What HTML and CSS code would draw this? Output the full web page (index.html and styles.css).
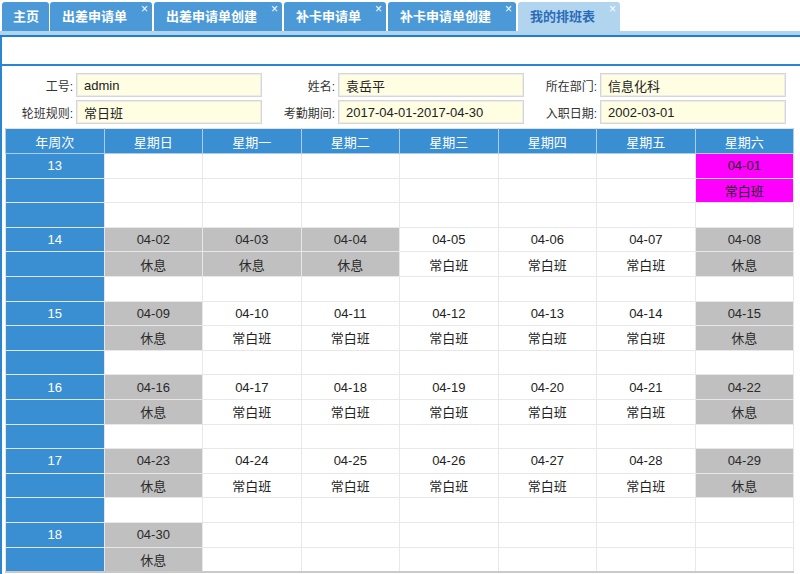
FILE: index.html
```html
<!DOCTYPE html>
<html lang="zh-CN">
<head>
<meta charset="utf-8">
<title>我的排班表</title>
<link rel="stylesheet" href="styles.css">
</head>
<body>
<div class="tabbar">
  <div class="tab home"><span class="tab-text">主页</span></div>
  <div class="tab"><span class="tab-text">出差申请单</span><span class="close">×</span></div>
  <div class="tab"><span class="tab-text">出差申请单创建</span><span class="close">×</span></div>
  <div class="tab"><span class="tab-text">补卡申请单</span><span class="close">×</span></div>
  <div class="tab"><span class="tab-text">补卡申请单创建</span><span class="close">×</span></div>
  <div class="tab active"><span class="tab-text">我的排班表</span><span class="close">×</span></div>
</div>
<div class="strip"></div>
<div class="panel">
  <div class="toolbar"></div>
  <div class="form">
    <label class="lbl">工号:</label><div class="field">admin</div>
    <label class="lbl">姓名:</label><div class="field">袁岳平</div>
    <label class="lbl">所在部门:</label><div class="field">信息化科</div>
    <label class="lbl">轮班规则:</label><div class="field">常日班</div>
    <label class="lbl">考勤期间:</label><div class="field">2017-04-01-2017-04-30</div>
    <label class="lbl">入职日期:</label><div class="field">2002-03-01</div>
  </div>
  <table class="sched">
    <thead>
      <tr><th>年周次</th><th>星期日</th><th>星期一</th><th>星期二</th><th>星期三</th><th>星期四</th><th>星期五</th><th>星期六</th></tr>
    </thead>
    <tbody>
      <tr><td class="wk">13</td><td></td><td></td><td></td><td></td><td></td><td></td><td class="hl">04-01</td></tr>
      <tr><td class="wk"></td><td></td><td></td><td></td><td></td><td></td><td></td><td class="hl">常白班</td></tr>
      <tr><td class="wk"></td><td></td><td></td><td></td><td></td><td></td><td></td><td></td></tr>

      <tr><td class="wk">14</td><td class="off">04-02</td><td class="off">04-03</td><td class="off">04-04</td><td>04-05</td><td>04-06</td><td>04-07</td><td class="off">04-08</td></tr>
      <tr><td class="wk"></td><td class="off">休息</td><td class="off">休息</td><td class="off">休息</td><td>常白班</td><td>常白班</td><td>常白班</td><td class="off">休息</td></tr>
      <tr><td class="wk"></td><td></td><td></td><td></td><td></td><td></td><td></td><td></td></tr>

      <tr><td class="wk">15</td><td class="off">04-09</td><td>04-10</td><td>04-11</td><td>04-12</td><td>04-13</td><td>04-14</td><td class="off">04-15</td></tr>
      <tr><td class="wk"></td><td class="off">休息</td><td>常白班</td><td>常白班</td><td>常白班</td><td>常白班</td><td>常白班</td><td class="off">休息</td></tr>
      <tr><td class="wk"></td><td></td><td></td><td></td><td></td><td></td><td></td><td></td></tr>

      <tr><td class="wk">16</td><td class="off">04-16</td><td>04-17</td><td>04-18</td><td>04-19</td><td>04-20</td><td>04-21</td><td class="off">04-22</td></tr>
      <tr><td class="wk"></td><td class="off">休息</td><td>常白班</td><td>常白班</td><td>常白班</td><td>常白班</td><td>常白班</td><td class="off">休息</td></tr>
      <tr><td class="wk"></td><td></td><td></td><td></td><td></td><td></td><td></td><td></td></tr>

      <tr><td class="wk">17</td><td class="off">04-23</td><td>04-24</td><td>04-25</td><td>04-26</td><td>04-27</td><td>04-28</td><td class="off">04-29</td></tr>
      <tr><td class="wk"></td><td class="off">休息</td><td>常白班</td><td>常白班</td><td>常白班</td><td>常白班</td><td>常白班</td><td class="off">休息</td></tr>
      <tr><td class="wk"></td><td></td><td></td><td></td><td></td><td></td><td></td><td></td></tr>

      <tr><td class="wk">18</td><td class="off">04-30</td><td></td><td></td><td></td><td></td><td></td><td></td></tr>
      <tr><td class="wk"></td><td class="off">休息</td><td></td><td></td><td></td><td></td><td></td><td></td></tr>
    </tbody>
  </table>
</div>
</body>
</html>
```

FILE: styles.css
```css
* { box-sizing: border-box; }
html, body { margin: 0; padding: 0; background: #ffffff; }
body {
  font-family: "Liberation Sans", "Noto Sans CJK SC", sans-serif;
  font-size: 13px;
  color: #222222;
  width: 800px;
  height: 574px;
  overflow: hidden;
}

.tabbar {
  display: flex;
  align-items: flex-end;
  gap: 2px;
  padding: 2px 0 0 2px;
  height: 31px;
}
.tab {
  height: 29px;
  flex: none;
  display: flex;
  align-items: stretch;
  background: #4b9ad7;
  color: #ffffff;
  font-weight: bold;
  border-radius: 3px 3px 0 0;
  padding-left: 12px;
}
.tab.home { padding: 0 10px 0 11px; margin-right: -1px; }
.tab-text {
  display: flex;
  align-items: center;
  padding-bottom: 2px;
}
.close {
  width: 25px;
  text-align: right;
  padding-right: 4px;
  font-size: 12px;
  font-weight: normal;
  line-height: 12px;
  padding-top: 1px;
}
.tab.active {
  background: #b2d5ef;
  color: #2a6cb8;
}
.tab.active .close { color: #ffffff; }

.strip {
  height: 6px;
  background: #b0d3ee;
  border-bottom: 2px solid #1f7dcd;
}

.panel {
  border-left: 2px solid #2a85d3;
  height: 537px;
}
.toolbar {
  height: 29px;
  border-bottom: 2px solid #2a85d3;
}

.form {
  display: grid;
  grid-template-columns: 71px 186px 70px 186px 70px 186px;
  grid-auto-rows: 24px;
  column-gap: 3px;
  row-gap: 3px;
  padding: 7px 0 0 0;
}
.lbl {
  display: flex;
  align-items: center;
  justify-content: flex-end;
  font-size: 12px;
  color: #333333;
}
.field {
  display: flex;
  align-items: center;
  background: #fffde2;
  border: 1px solid #d6d6d6;
  box-shadow: inset 0 0 0 1px #ececec;
  padding-left: 7px;
  font-size: 13px;
  color: #222222;
}

.sched {
  margin: 4px 0 0 3px;
  width: 789px;
  table-layout: fixed;
  border-collapse: collapse;
  border: 1px solid #e2e2e2;
  border-bottom: 2px solid #c9c9c9;
}
.sched th {
  height: 25px;
  background: #3a8fd3;
  color: #ffffff;
  font-weight: normal;
  border: 1px solid #a9cdec;
  border-top: 0;
  padding: 0;
  text-align: center;
}
.sched td {
  height: 24.6px;
  padding: 0;
  text-align: center;
  border: 1px solid #e8e8e8;
  background: #ffffff;
  color: #222222;
}
.sched td.wk {
  background: #3a8fd3;
  color: #ffffff;
  border-color: #dde8f2;
}
.sched td.off { background: #c0c0c0; color: #2a2a2a; }
.sched td.hl { background: #ff00ff; color: #222222; }
```
